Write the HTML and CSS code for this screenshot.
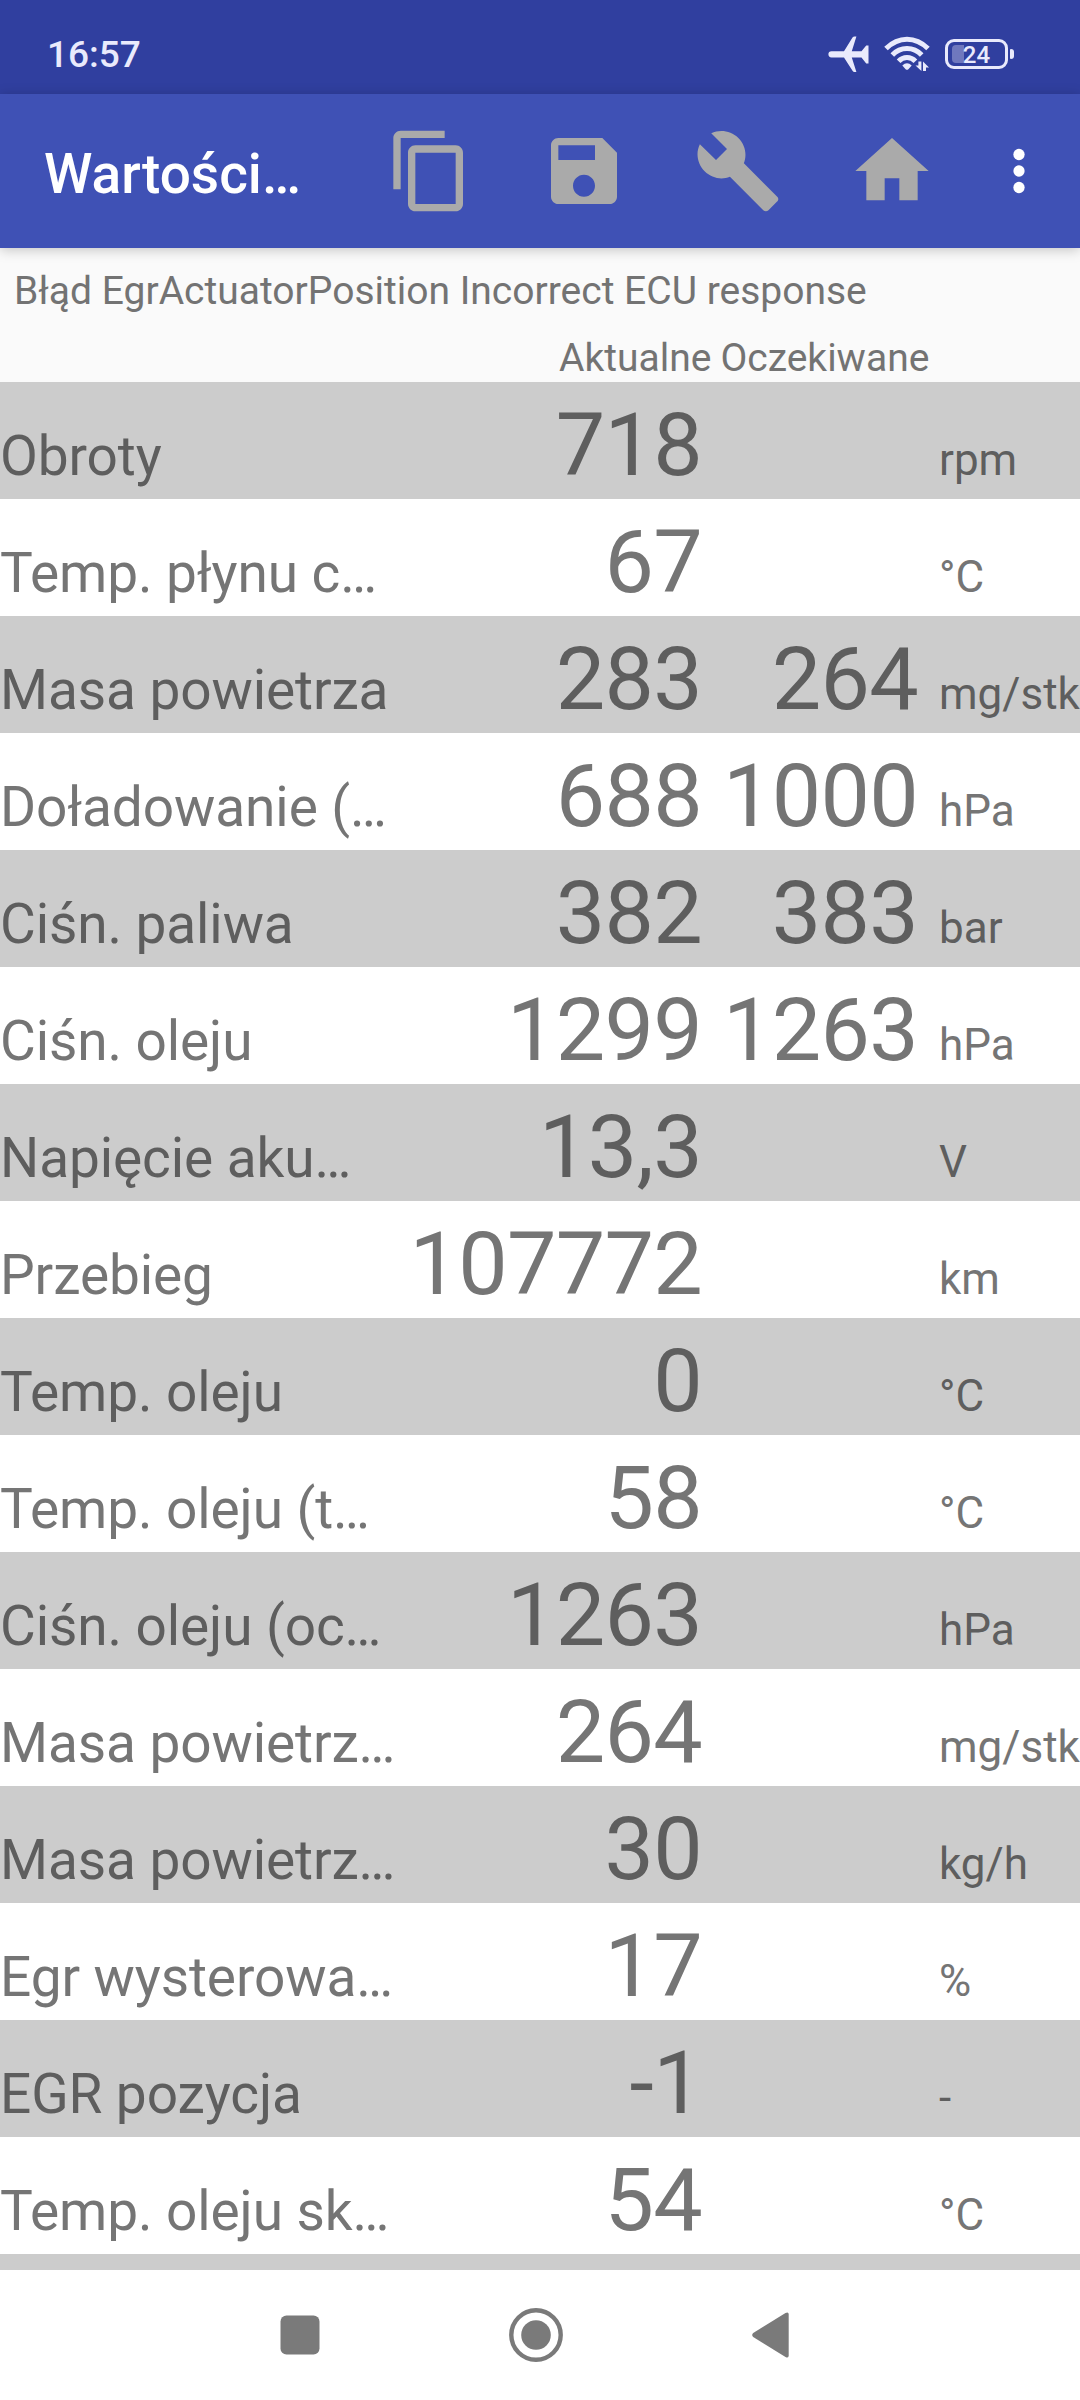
FILE: index.html
```html
<!DOCTYPE html>
<html lang="pl">
<head>
  <meta charset="UTF-8" />
  <meta name="viewport" content="width=device-width,initial-scale=1" />
  <title>Wartości</title>
  <link rel="stylesheet" href="styles.css">
</head>
<body>
  <div id="status-bar">
    <span class="clock">16:57</span>
    <svg class="plane" width="41" height="37" viewBox="0 0 41 37"><path d="M3.5 15.2H16L24.5 1.6Q25.3.5 26.5.5H28.4L23.8 15.2H33.5L38.2 9.5H40.5V27.5H38.2L33.5 21.4H23.8L28.4 36H26.5Q25.3 36 24.5 34.8L16 21.4H3.5A3.1 3.1 0 0 1 3.5 15.2Z"/></svg>
    <svg class="wifi" width="47" height="36" viewBox="0 0 47 36">
      <g fill="none" stroke="#e9eafc" stroke-width="5">
        <path d="M2 12.5Q11.5 3.2 23 3.2T44 12.5"/>
        <path d="M8.3 19Q14.5 12.6 23 12.6T37.7 19"/>
        <path d="M14.6 25.3Q18 21.6 23 21.6T31.4 25.3"/>
      </g>
      <path d="M18.3 29.5Q23 25.2 27.7 29.5L24.4 33.2Q23 34.5 21.6 33.2Z"/>
      <path d="M34.4 25.5H37.4V35L31.5 29.5H34.4ZM39 35V25.5L45 31.5H42V35Z"/>
    </svg>
    <div class="battery"><i></i><span>24</span></div>
  </div>

  <div id="toolbar">
    <h1>Wartości…</h1>
    <svg class="action" viewBox="0 0 24 24"><path d="M16 1H4c-1.1 0-2 .9-2 2v14h2V3h12V1zm3 4H8c-1.1 0-2 .9-2 2v14c0 1.1.9 2 2 2h11c1.1 0 2-.9 2-2V7c0-1.1-.9-2-2-2zm0 16H8V7h11v14z"/></svg>
    <svg class="action" viewBox="0 0 24 24"><path d="M17 3H5c-1.11 0-2 .9-2 2v14c0 1.1.89 2 2 2h14c1.1 0 2-.9 2-2V7l-4-4zm-5 16c-1.66 0-3-1.34-3-3s1.34-3 3-3 3 1.34 3 3-1.34 3-3 3zm3-10H5V5h10v4z"/></svg>
    <svg class="action" viewBox="0 0 24 24"><path d="M22.7 19l-9.1-9.1c.9-2.3.4-5-1.5-6.9-2-2-5-2.4-7.4-1.3L9 6 6 9 1.6 4.7C.4 7.1.9 10.1 2.9 12.1c1.9 1.9 4.6 2.4 6.9 1.5l9.1 9.1c.4.4 1 .4 1.4 0l2.3-2.3c.5-.4.5-1.1.1-1.4z"/></svg>
    <svg class="action" viewBox="0 0 24 24"><path d="M10 20v-6h4v6h5v-8h3L12 3 2 12h3v8z"/></svg>
    <svg class="more" viewBox="0 0 24 24"><circle cx="12" cy="6" r="2.05"/><circle cx="12" cy="12" r="2.05"/><circle cx="12" cy="18" r="2.05"/></svg>
  </div>

  <div id="info">
    <p class="error">Błąd EgrActuatorPosition Incorrect ECU response</p>
    <p class="heads"><span>Aktualne</span><span>Oczekiwane</span></p>
  </div>

  <div id="values">
    <div class="row"><span class="name">Obroty</span><span class="now">718</span><span class="want"></span><span class="unit">rpm</span></div>
    <div class="row"><span class="name">Temp. płynu c…</span><span class="now">67</span><span class="want"></span><span class="unit">°C</span></div>
    <div class="row"><span class="name">Masa powietrza</span><span class="now">283</span><span class="want">264</span><span class="unit">mg/stk</span></div>
    <div class="row"><span class="name">Doładowanie (…</span><span class="now">688</span><span class="want">1000</span><span class="unit">hPa</span></div>
    <div class="row"><span class="name">Ciśn. paliwa</span><span class="now">382</span><span class="want">383</span><span class="unit">bar</span></div>
    <div class="row"><span class="name">Ciśn. oleju</span><span class="now">1299</span><span class="want">1263</span><span class="unit">hPa</span></div>
    <div class="row"><span class="name">Napięcie aku…</span><span class="now">13,3</span><span class="want"></span><span class="unit">V</span></div>
    <div class="row"><span class="name">Przebieg</span><span class="now">107772</span><span class="want"></span><span class="unit">km</span></div>
    <div class="row"><span class="name">Temp. oleju</span><span class="now">0</span><span class="want"></span><span class="unit">°C</span></div>
    <div class="row"><span class="name">Temp. oleju (t…</span><span class="now">58</span><span class="want"></span><span class="unit">°C</span></div>
    <div class="row"><span class="name">Ciśn. oleju (oc…</span><span class="now">1263</span><span class="want"></span><span class="unit">hPa</span></div>
    <div class="row"><span class="name">Masa powietrz…</span><span class="now">264</span><span class="want"></span><span class="unit">mg/stk</span></div>
    <div class="row"><span class="name">Masa powietrz…</span><span class="now">30</span><span class="want"></span><span class="unit">kg/h</span></div>
    <div class="row"><span class="name">Egr wysterowa…</span><span class="now">17</span><span class="want"></span><span class="unit">%</span></div>
    <div class="row"><span class="name">EGR pozycja</span><span class="now">-1</span><span class="want"></span><span class="unit">-</span></div>
    <div class="row"><span class="name">Temp. oleju sk…</span><span class="now">54</span><span class="want"></span><span class="unit">°C</span></div>
    <div class="row"></div>
  </div>

  <div id="nav-bar">
    <svg width="40" height="40" viewBox="0 0 40 40"><rect x=".5" y=".5" width="39" height="39" rx="6"/></svg>
    <svg width="54" height="54" viewBox="0 0 54 54"><circle cx="27" cy="27" r="24.7" fill="none" stroke="#7a7a7a" stroke-width="4.4"/><circle cx="27" cy="27" r="14.8"/></svg>
    <svg width="37" height="46" viewBox="0 0 37 46"><path d="M1.2 21 33.5 1Q36.7-.6 36.7 2.5V43.5Q36.7 46.6 33.5 45L1.2 25Q-.8 23 1.2 21Z"/></svg>
  </div>
</body>
</html>
```

FILE: styles.css
```css
* {margin:0;padding:0;box-sizing:border-box}
body {
  width:1080px;height:2400px;overflow:hidden;background:#fafafa;
  display:flex;flex-direction:column;font-family:Roboto, sans-serif;color:#737373;
}
svg {display:block;flex-shrink:0}

#status-bar {
  height:94px;padding:14px 72px 0 47px;background:#303f9f;
  display:flex;align-items:center;color:#e9eafc;fill:#e9eafc;
}
.clock {flex:1;padding-top:2px;font-size:37px;font-weight:500;line-height:44px}
.wifi {margin:0 14px 0 15px}
.battery {
  position:relative;width:63px;height:30px;border:3px solid #e9eafc;border-radius:9px;
  display:flex;align-items:center;justify-content:center;
}
.battery::after {
  content:"";position:absolute;right:-9px;top:7px;width:4px;height:10px;
  background:#e9eafc;border-radius:1px 3px 3px 1px;
}
.battery i {
  position:absolute;left:4px;top:3px;width:12px;height:18px;
  background:#6f78be;border-radius:4px 0 0 4px;
}
.battery span {position:relative;padding-top:2px;font-size:24px;font-weight:500;line-height:24px}

#toolbar {
  position:relative;height:154px;padding:0 28px 0 44px;background:#3f51b5;
  display:flex;align-items:center;box-shadow:0 2px 12px rgba(0,0,0,.22);
}
#toolbar h1 {width:342px;padding-top:5px;font-size:55px;font-weight:500;color:#fff;white-space:nowrap}
.action {width:88px;height:88px;margin-right:66px;fill:#aaa}
.more {width:66px;height:66px;margin-left:-16px;fill:#fff}

#info {height:134px;padding:20px 0 0 14px;font-size:39px;line-height:46px;white-space:nowrap}
.heads {display:flex;gap:9px;margin-top:21px;padding-left:545px}

#values {height:1888px;overflow:hidden}
.row {
  height:117px;padding-top:11px;background:#fff;color:#757575;
  display:flex;align-items:baseline;white-space:nowrap;
}
.row:nth-child(odd) {background:#ccc;color:#5e5e5e}
.name {width:397px;font-size:55px;letter-spacing:-.1px}
.now, .want {font-size:88px;line-height:103px;letter-spacing:-.7px;text-align:right}
.now {width:305px}
.want {width:216px}
.unit {padding-left:21px;font-size:44px}

#nav-bar {
  flex:1;padding-left:280px;background:#fff;fill:#7a7a7a;
  display:flex;align-items:center;
}
#nav-bar svg:nth-child(2) {margin:0 189px}
```
